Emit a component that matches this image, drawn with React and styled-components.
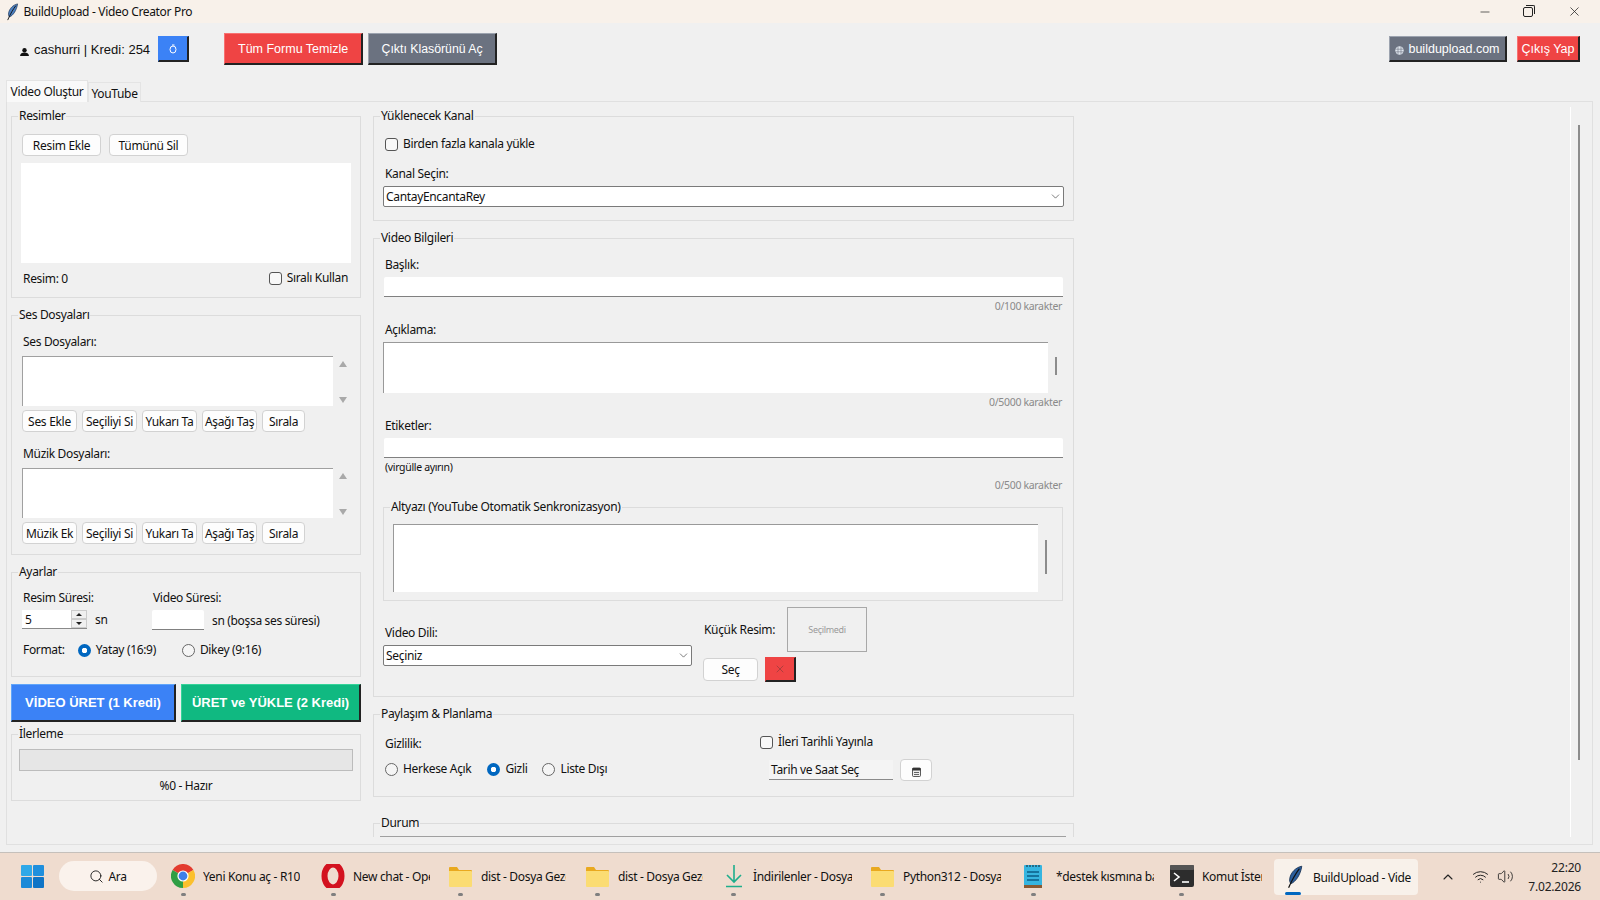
import React from "react";
import styled, { createGlobalStyle } from "styled-components";
import { Search, ChevronUp, ChevronDown, Wifi, Volume2, Minus, X } from "lucide-react";

const UI = `"Noto Sans", "Open Sans", sans-serif`;
const Global = createGlobalStyle`
  html, body { margin: 0; height: 900px; overflow: hidden; background: #f0f0f0; }
  * { box-sizing: border-box; }
  body { font-family: ${UI}; font-size: 12px; letter-spacing: -0.33px; color: #111; }
`;
const Page = styled.div`display:flex;flex-direction:column;height:900px;`;
const TitleBar = styled.div`height:23px;background:#f8f1ea;display:flex;align-items:center;padding-left:5px;font-size:12px;flex:none;`;
const TitleText = styled.span`margin-left:4px;`;
const WinControls = styled.div`margin-left:auto;display:flex;align-items:center;padding-right:3px;`;
const WinBtn = styled.span`width:45px;display:flex;justify-content:center;align-items:center;height:23px;color:#222;`;
const Restore = styled.span`width:10px;height:10px;border:1px solid #222;border-radius:2px;position:relative;background:#f8f1ea;margin:1px 4px 0 0;
  &::before{content:"";position:absolute;top:-3px;right:-3px;width:8px;height:8px;border-top:1px solid #222;border-right:1px solid #222;border-top-right-radius:2px;}`;
const Header = styled.div`height:58px;flex:none;display:flex;align-items:flex-start;padding:10px 20px 0 20px;`;
const UserBlock = styled.div`display:flex;align-items:center;height:26px;margin-top:3px;font-size:13px;font-family:"Liberation Sans",sans-serif;letter-spacing:0;`;
const UserText = styled.span`margin-left:5px;`;
const RawBtn = styled.button`font-family:"Liberation Sans",sans-serif;letter-spacing:0;color:#fff;background:${p=>p.$bg};
  border:1px solid ${p=>p.$hi};border-right:2px solid #222;border-bottom:2px solid #222;padding:0;display:flex;align-items:center;justify-content:center;
  width:${p=>p.$w}px;height:${p=>p.$h}px;font-size:${p=>p.$fs||12.5}px;margin-left:${p=>p.$ml||0}px;margin-top:${p=>p.$mt||0}px;font-weight:${p=>p.$bold?700:400};flex:none;`;
const Spacer = styled.div`flex:1;`;
const Tabs = styled.div`display:flex;align-items:flex-end;height:21px;padding-left:6px;flex:none;position:relative;z-index:1;margin-bottom:-1px;`;
const Tab = styled.div`height:${p=>p.$active?22:20}px;width:${p=>p.$w}px;background:${p=>p.$active?"#f9f9f9":"#f0f0f0"};border:1px solid #e4e4e4;border-bottom:none;display:flex;align-items:center;justify-content:center;padding-top:${p=>p.$active?0:2}px;font-size:12px;`;
const Pane = styled.div`height:744px;margin:0 7px 0 6px;border:1px solid #e0e0e0;flex:none;display:flex;padding:6px 0 0 4px;position:relative;`;
const LeftCol = styled.div`width:350px;flex:none;display:flex;flex-direction:column;`;
const RightCol = styled.div`width:701px;margin-left:12px;flex:none;height:729px;overflow:hidden;`;
const Field = styled.fieldset`margin:${p=>p.$mt||0}px 0 0;padding:0;border:1px solid #dcdcdc;min-width:0;height:${p=>p.$h}px;`;
const Legend = styled.legend`margin-left:${p=>p.$ml||6}px;padding:0 1px;line-height:16px;height:16px;`;
const Body = styled.div`padding:${p=>p.$pt||0}px ${p=>p.$pr||0}px 0 ${p=>p.$pl||10}px;`;
const Row = styled.div`display:flex;align-items:center;gap:${p=>p.$gap||0}px;margin-top:${p=>p.$mt||0}px;`;
const Label = styled.div`line-height:16px;height:16px;margin-top:${p=>p.$mt||0}px;padding-left:${p=>p.$pl||0}px;white-space:nowrap;`;
const SoftBtn = styled.button`height:${p=>p.$h||22}px;width:${p=>p.$w}px;background:#fdfdfd;border:1px solid #d2d2d2;border-radius:4px;font-family:${UI};font-size:12px;letter-spacing:-0.3px;color:#111;padding:0;white-space:nowrap;overflow:hidden;flex:none;display:flex;align-items:center;justify-content:center;`;
const ImageArea = styled.div`width:330px;height:100px;background:#fff;margin:7px 0 0 -1px;`;
const StatusRow = styled.div`display:flex;justify-content:space-between;align-items:center;height:18px;margin-top:6px;padding:0 12px 0 1px;`;
const Check = styled.input.attrs({type:"checkbox"})`appearance:none;width:13px;height:13px;margin:0;border:1px solid #555;border-radius:3px;background:#f8f8f8;flex:none;`;
const Radio = styled.input.attrs({type:"radio"})`appearance:none;width:13px;height:13px;margin:0;border-radius:50%;flex:none;border:1px solid #666;background:#f5f5f5;
  &:checked{border:none;background:radial-gradient(circle,#fff 0 2.5px,#0067c0 3px);}`;
const OptLabel = styled.label`display:flex;align-items:center;gap:5px;line-height:16px;height:16px;margin-left:${p=>p.$ml||0}px;margin-top:${p=>p.$mt||0}px;white-space:nowrap;`;
const ListWrap = styled.div`display:flex;margin-top:6px;height:50px;`;
const ListBox = styled.div`width:311px;background:#fff;border-top:1px solid #a0a0a0;border-left:1px solid #a0a0a0;`;
const ListArrows = styled.div`display:flex;flex-direction:column;justify-content:space-between;align-items:center;width:20px;padding:5px 0 3px 0;`;
const Tri = styled.span`width:0;height:0;border-left:4.5px solid transparent;border-right:4.5px solid transparent;${p=>p.$up?"border-bottom":"border-top"}:6px solid #a9a9a9;`;
const BtnRow = styled.div`display:flex;gap:5px;margin-top:4px;`;
const SettingsGrid = styled.div`display:grid;grid-template-columns:130px 1fr;`;
const Spin = styled.div`width:65px;height:19px;background:#fff;border-bottom:1px solid #8a8a8a;display:flex;align-items:center;padding-left:3px;justify-content:space-between;`;
const SpinBtns = styled.div`width:16px;height:18px;background:#f0f0f0;display:flex;flex-direction:column;`;
const SpinBtn = styled.span`flex:1;display:flex;align-items:center;justify-content:center;border:1px solid #ccc;`;
const TinyTri = styled.span`width:0;height:0;border-left:3px solid transparent;border-right:3px solid transparent;${p=>p.$up?"border-bottom":"border-top"}:3px solid #222;`;
const PlainInput = styled.div`width:${p=>p.$w?p.$w+"px":"calc(100% - 1px)"};height:${p=>p.$h||20}px;background:#fff;border-bottom:1px solid #808080;border-radius:2px 2px 0 0;flex:none;margin:${p=>p.$mt||0}px 0 0 ${p=>p.$w?0:1}px;`;
const Progress = styled.div`width:334px;height:22px;background:#e6e6e6;border:1px solid #bcbcbc;margin:7px 0 0 7px;`;
const Centered = styled.div`text-align:center;line-height:16px;margin-top:7px;`;
const Select = styled.div`height:21px;width:${p=>p.$w}px;background:#fff;border:1px solid #7a7a7a;border-radius:2px;display:flex;align-items:center;justify-content:space-between;padding:0 1px 0 2px;margin-top:${p=>p.$mt||0}px;`;
const Counter = styled.div`text-align:right;color:#8a8a8a;font-size:10.5px;line-height:16px;height:16px;padding-right:1px;margin-top:${p=>p.$mt||0}px;`;
const Small = styled.div`font-size:10.5px;line-height:16px;height:16px;margin-top:1px;padding-left:2px;`;
const AreaWrap = styled.div`display:flex;margin-top:${p=>p.$mt||4}px;`;
const TextArea = styled.div`width:${p=>p.$w}px;height:${p=>p.$h}px;background:#fff;border-top:1px solid #999;border-left:1px solid #999;flex:none;`;
const ThinBar = styled.div`width:2px;height:${p=>p.$h}px;background:#8c8c8c;margin:${p=>p.$mt}px 0 0 ${p=>p.$ml}px;`;
const Split = styled.div`display:flex;margin-top:6px;`;
const VideoLang = styled.div`width:308px;padding-top:18px;`;
const ThumbCol = styled.div`margin-left:12px;display:flex;flex-direction:column;`;
const ThumbLabel = styled.span`width:84px;padding-left:1px;white-space:nowrap;`;
const Thumb = styled.div`width:80px;height:45px;border:1px solid #a8a8a8;display:flex;align-items:center;justify-content:center;color:#9a9a9a;font-size:9px;`;
const ThumbRow = styled.div`display:flex;align-items:center;`;
const PlanCols = styled.div`display:flex;`;
const Privacy = styled.div`width:375px;padding-top:14px;`;
const Schedule = styled.div`padding-top:11px;`;
const DateInput = styled.div`width:124px;height:20px;background:#f4f4f4;border-bottom:1px solid #8a8a8a;display:flex;align-items:center;padding-left:2px;margin-left:9px;`;
const InnerLine = styled.div`height:6px;margin:5px 7px 0 6px;border-top:1px solid #a0a0a0;background:#f0f0f0;`;
const ScrollLine = styled.div`position:absolute;left:1563px;top:5px;width:1px;height:730px;background:#fff;`;
const ScrollThumb = styled.div`position:absolute;left:1571px;top:23px;width:2px;height:635px;background:#8c8c8c;`;
const Taskbar = styled.div`position:relative;margin-top:7px;flex:1;background:#efdccf;border-top:1px solid #c5c0bb;display:flex;align-items:center;padding:0 0 2px 21px;`;
const SearchPill = styled.div`width:98px;height:30px;border-radius:15px;background:#faf2ec;margin-left:15px;display:flex;align-items:center;justify-content:center;gap:4px;font-size:12px;margin-right:14px;flex:none;`;
const TaskItem = styled.div`width:${p=>p.$w}px;height:46px;flex:none;display:flex;align-items:center;position:relative;`;
const TaskIcon = styled.span`width:${p=>p.$w||32}px;flex:none;display:flex;align-items:center;position:relative;`;
const TaskLabel = styled.span`width:${p=>p.$w}px;overflow:hidden;white-space:nowrap;flex:none;`;
const Dot = styled.span`position:absolute;left:${p=>p.$l}px;top:40px;width:5px;height:3px;border-radius:2px;background:#7f7f7f;`;
const Active = styled.div`margin-left:-11px;width:144px;height:36px;background:#f8f1ea;border-radius:4px;display:flex;align-items:center;padding-left:11px;position:relative;flex:none;margin-top:2px;`;
const ActiveBar = styled.span`position:absolute;left:11px;bottom:0;width:16px;height:3px;border-radius:2px;background:#0067c0;`;
const Tray = styled.div`position:absolute;right:0;top:0;height:47px;display:flex;align-items:center;color:#222;`;
const Clock = styled.div`font-size:12px;letter-spacing:-0.2px;text-align:right;line-height:19px;margin:0 19px 0 14px;`;
const TrayIcon = styled.span`display:flex;margin-right:${p=>p.$mr}px;`;

const Feather = ({s=18,dark}) => (
  <svg width={s*0.8} height={s} viewBox="0 0 16 20">
    <path d="M14 1C9 2 5 6 4 11c-.4 2 0 3.5 1 4.5C9 14 13 8 14 1Z" fill={dark?"#2b5d9c":"#4c7fc0"} stroke="#17304f" strokeWidth=".7"/>
    <path d="M12 3C9 7 6 12 3 19" stroke="#111" strokeWidth="1" fill="none"/>
  </svg>
);
const WinLogo = () => (
  <svg width="23" height="23" viewBox="0 0 23 23">
    <rect x="0" y="0" width="11" height="11" rx="1" fill="#2fa8e8"/><rect x="12" y="0" width="11" height="11" rx="1" fill="#1f8fdd"/>
    <rect x="0" y="12" width="11" height="11" rx="1" fill="#1c8ad8"/><rect x="12" y="12" width="11" height="11" rx="1" fill="#0f74c6"/>
  </svg>
);
const Chrome = () => (
  <svg width="24" height="24" viewBox="0 0 24 24">
    <path d="M12 12 1.6 6A12 12 0 0 1 22.4 6Z" fill="#e33b2e"/>
    <path d="M12 12 22.4 6A12 12 0 0 1 12 24Z" fill="#fbc02d"/>
    <path d="M12 12 12 24A12 12 0 0 1 1.6 6Z" fill="#2f9e44"/>
    <circle cx="12" cy="12" r="5.6" fill="#fff"/><circle cx="12" cy="12" r="4.4" fill="#3f7fe8"/>
  </svg>
);
const Opera = () => (
  <svg width="24" height="24" viewBox="0 0 24 24">
    <ellipse cx="12" cy="12" rx="8.5" ry="11.5" fill="none" stroke="#d3121f" strokeWidth="6"/>
  </svg>
);
const Folder = () => (
  <svg width="23" height="21" viewBox="0 0 23 21">
    <path d="M0 2a1 1 0 0 1 1-1h7l2 3h12a1 1 0 0 1 1 1v3H0Z" fill="#e9a91f"/>
    <path d="M0 5h22a1 1 0 0 1 1 1v14a1 1 0 0 1-1 1H1a1 1 0 0 1-1-1Z" fill="#fbdc73"/>
  </svg>
);
const Download = () => (
  <svg width="20" height="24" viewBox="0 0 20 24" fill="none" stroke="#1fae8c" strokeWidth="1.6">
    <path d="M10 1v17M3 11l7 7 7-7M2 22.5h16"/>
  </svg>
);
const Notepad = () => (
  <svg width="18" height="24" viewBox="0 0 18 24">
    <rect x="0" y="1" width="18" height="23" rx="1" fill="#36b5e0"/><rect x="0" y="21" width="18" height="3" fill="#8a5a32"/>
    <path d="M3 8h12M3 12h12M3 16h12" stroke="#0b5d86" strokeWidth="1.6"/>
    <path d="M3 1v2M6 1v2M9 1v2M12 1v2M15 1v2" stroke="#123" strokeWidth="1"/>
  </svg>
);
const Terminal = () => (
  <svg width="24" height="22" viewBox="0 0 24 22">
    <rect width="24" height="22" rx="2" fill="#2d2d2d"/><rect width="24" height="5" rx="1" fill="#555"/>
    <path d="M4 8l5 4-5 4" fill="none" stroke="#fff" strokeWidth="1.6"/><path d="M12 17h7" stroke="#fff" strokeWidth="1.6"/>
  </svg>
);
const Person = () => (
  <svg width="9" height="8" viewBox="0 0 9 8" style={{marginTop:6}}><circle cx="4.5" cy="2.3" r="2.2" fill="#111"/><path d="M0 8c.4-2.5 2-3.4 4.5-3.4S8.600 5.500 9 8Z" fill="#111"/></svg>
);
const Refresh = () => (
  <svg width="8" height="10" viewBox="0 0 8 10" fill="none" stroke="#fff" strokeWidth="1"><ellipse cx="4" cy="5.500" rx="3" ry="3.500"/><path d="M3 1h2.500"/></svg>
);
const Globe = () => (
  <svg width="9" height="9" viewBox="0 0 9 9" style={{marginRight:4,marginTop:3}}><circle cx="4.500" cy="4.500" r="4.200" fill="#dfe6ee"/><path d="M.5 3.200h8M.5 5.800h8M3 .5v8M6 .5v8" stroke="#6b7280" strokeWidth=".6"/></svg>
);
const Calendar = () => (
  <svg width="9" height="10" viewBox="0 0 9 10" style={{marginTop:4}}><rect x=".5" y="1" width="8" height="8.500" rx="1" fill="#eee" stroke="#333" strokeWidth=".8"/><rect x=".5" y="1" width="8" height="2.500" fill="#333"/><path d="M2 5.500h5M2 7.500h5" stroke="#555" strokeWidth=".9"/></svg>
);

const SoundButtons = ({first}) => (
  <BtnRow>
    <SoftBtn $w={55}>{first}</SoftBtn>
    <SoftBtn $w={55}>Seçiliyi Si</SoftBtn>
    <SoftBtn $w={55}>Yukarı Ta</SoftBtn>
    <SoftBtn $w={55}>Aşağı Taş</SoftBtn>
    <SoftBtn $w={43}>Sırala</SoftBtn>
  </BtnRow>
);
const SoundList = () => (
  <ListWrap>
    <ListBox />
    <ListArrows><Tri $up /><Tri /></ListArrows>
  </ListWrap>
);

const tasks = [
  {w:150,lw:97,icon:<Chrome/>,dot:10,t:"Yeni Konu aç - R10"},
  {w:128,lw:77,icon:<Opera/>,dot:10,t:"New chat - Opera"},
  {w:137,lw:85,icon:<Folder/>,dot:9,t:"dist - Dosya Gezgini"},
  {w:138,lw:85,icon:<Folder/>,dot:9,t:"dist - Dosya Gezgini"},
  {w:147,lw:99,icon:<Download/>,iw:29,dot:7,t:"İndirilenler - Dosya"},
  {w:153,lw:98,icon:<Folder/>,dot:9,t:"Python312 - Dosya"},
  {w:146,lw:98,icon:<Notepad/>,dot:7,t:"*destek kısmına bak"},
  {w:115,lw:60,icon:<Terminal/>,dot:9,t:"Komut İstemi"},
];

export default function App() {
  return (
    <Page>
      <Global />
      <TitleBar>
        <Feather />
        <TitleText>BuildUpload - Video Creator Pro</TitleText>
        <WinControls>
          <WinBtn><Minus size={14} strokeWidth={1.2}/></WinBtn>
          <WinBtn><Restore/></WinBtn>
          <WinBtn><X size={15} strokeWidth={1.2}/></WinBtn>
        </WinControls>
      </TitleBar>
      <Header>
        <UserBlock><Person /><UserText>cashurri | Kredi: 254</UserText></UserBlock>
        <RawBtn $bg="#3b82f6" $hi="#3b82f6" $w={31} $h={26} $ml={8} $mt={3}><Refresh/></RawBtn>
        <RawBtn $bg="#ef4444" $hi="#f87171" $w={139} $h={32} $ml={35}>Tüm Formu Temizle</RawBtn>
        <RawBtn $bg="#6b7280" $hi="#9ca3af" $w={129} $h={32} $ml={5} $fs={12.3}>Çıktı Klasörünü Aç</RawBtn>
        <Spacer />
        <RawBtn $bg="#6b7280" $hi="#9ca3af" $w={118} $h={26} $mt={3}><Globe/>buildupload.com</RawBtn>
        <RawBtn $bg="#ef4444" $hi="#f87171" $w={63} $h={26} $ml={10} $mt={3}>Çıkış Yap</RawBtn>
      </Header>
      <Tabs>
        <Tab $active $w={82}>Video Oluştur</Tab>
        <Tab $w={53}>YouTube</Tab>
      </Tabs>
      <Pane>
        <LeftCol>
          <Field $h={190}>
            <Legend>Resimler</Legend>
            <Body $pt={10}>
              <Row $gap={8}><SoftBtn $w={79}>Resim Ekle</SoftBtn><SoftBtn $w={79}>Tümünü Sil</SoftBtn></Row>
              <ImageArea />
              <StatusRow><span>Resim: 0</span><OptLabel><Check/>Sıralı Kullan</OptLabel></StatusRow>
            </Body>
          </Field>
          <Field $h={248} $mt={9}>
            <Legend>Ses Dosyaları</Legend>
            <Body $pt={11}>
              <Label $pl={1}>Ses Dosyaları:</Label>
              <SoundList />
              <SoundButtons first="Ses Ekle" />
              <Label $mt={14} $pl={1}>Müzik Dosyaları:</Label>
              <SoundList />
              <SoundButtons first="Müzik Ek" />
            </Body>
          </Field>
          <Field $h={113} $mt={9}>
            <Legend>Ayarlar</Legend>
            <Body $pt={10}>
              <SettingsGrid>
                <div>
                  <Label $pl={1}>Resim Süresi:</Label>
                  <Row $mt={4} $gap={8}>
                    <Spin>5<SpinBtns><SpinBtn><TinyTri $up/></SpinBtn><SpinBtn><TinyTri/></SpinBtn></SpinBtns></Spin>
                    <span>sn</span>
                  </Row>
                </div>
                <div>
                  <Label $pl={1}>Video Süresi:</Label>
                  <Row $mt={4} $gap={8}>
                    <PlainInput $w={52} />
                    <span>sn (boşsa ses süresi)</span>
                  </Row>
                </div>
              </SettingsGrid>
              <Row $mt={12}>
                <Label $pl={1}>Format:</Label>
                <OptLabel $ml={13}><Radio name="fmt" defaultChecked/>Yatay (16:9)</OptLabel>
                <OptLabel $ml={26}><Radio name="fmt"/>Dikey (9:16)</OptLabel>
              </Row>
            </Body>
          </Field>
          <Row $mt={7} $gap={5}>
            <RawBtn $bg="#3b82f6" $hi="#60a5fa" $w={165} $h={38} $fs={13} $bold>VİDEO ÜRET (1 Kredi)</RawBtn>
            <RawBtn $bg="#10b981" $hi="#34d399" $w={180} $h={38} $fs={13} $bold>ÜRET ve YÜKLE (2 Kredi)</RawBtn>
          </Row>
          <Field $h={75} $mt={4}>
            <Legend>İlerleme</Legend>
            <Progress />
            <Centered>%0 - Hazır</Centered>
          </Field>
        </LeftCol>
        <RightCol>
          <Field $h={113}>
            <Legend>Yüklenecek Kanal</Legend>
            <Body $pt={12} $pl={9}>
              <OptLabel $ml={2}><Check/>Birden fazla kanala yükle</OptLabel>
              <Label $mt={14} $pl={2}>Kanal Seçin:</Label>
              <Select $w={681} $mt={4}>CantayEncantaRey<ChevronDown size={13} strokeWidth={1} /></Select>
            </Body>
          </Field>
          <Field $h={467} $mt={9}>
            <Legend>Video Bilgileri</Legend>
            <Body $pt={11} $pl={9} $pr={10}>
              <Label $pl={2}>Başlık:</Label>
              <PlainInput $mt={4} />
              <Counter $mt={1}>0/100 karakter</Counter>
              <Label $mt={8} $pl={2}>Açıklama:</Label>
              <AreaWrap><TextArea $w={665} $h={51}/><ThinBar $h={18} $mt={15} $ml={7}/></AreaWrap>
              <Counter $mt={1}>0/5000 karakter</Counter>
              <Label $mt={8} $pl={2}>Etiketler:</Label>
              <PlainInput $mt={4} />
              <Small>(virgülle ayırın)</Small>
              <Counter $mt={2}>0/500 karakter</Counter>
              <Field $h={102} $mt={6}>
                <Legend>Altyazı (YouTube Otomatik Senkronizasyon)</Legend>
                <Body $pl={9}>
                  <AreaWrap $mt={9}><TextArea $w={645} $h={68}/><ThinBar $h={34} $mt={16} $ml={7}/></AreaWrap>
                </Body>
              </Field>
              <Split>
                <VideoLang>
                  <Label $pl={2}>Video Dili:</Label>
                  <Select $w={309} $mt={4}>Seçiniz<ChevronDown size={13} strokeWidth={1} /></Select>
                </VideoLang>
                <ThumbCol>
                  <ThumbRow><ThumbLabel>Küçük Resim:</ThumbLabel><Thumb>Seçilmedi</Thumb></ThumbRow>
                  <Row $mt={5} $gap={7}>
                    <SoftBtn $w={55} $h={23}>Seç</SoftBtn>
                    <RawBtn $bg="#ef4444" $hi="#ef4444" $w={31} $h={25}><X size={12} color="#9a3b3b" strokeWidth={1.5}/></RawBtn>
                  </Row>
                </ThumbCol>
              </Split>
            </Body>
          </Field>
          <Field $h={91} $mt={9}>
            <Legend>Paylaşım & Planlama</Legend>
            <Body $pl={11}>
              <PlanCols>
                <Privacy>
                  <Label>Gizlilik:</Label>
                  <Row $mt={9}>
                    <OptLabel><Radio name="pr"/>Herkese Açık</OptLabel>
                    <OptLabel $ml={16}><Radio name="pr" defaultChecked/>Gizli</OptLabel>
                    <OptLabel $ml={15}><Radio name="pr"/>Liste Dışı</OptLabel>
                  </Row>
                </Privacy>
                <Schedule>
                  <OptLabel $mt={1}><Check/>İleri Tarihli Yayınla</OptLabel>
                  <Row $mt={9} $gap={7}>
                    <DateInput>Tarih ve Saat Seç</DateInput>
                    <SoftBtn $w={32} $h={22}><Calendar/></SoftBtn>
                  </Row>
                </Schedule>
              </PlanCols>
            </Body>
          </Field>
          <Field $h={40} $mt={18}>
            <Legend>Durum</Legend>
            <InnerLine />
          </Field>
        </RightCol>
        <ScrollLine />
        <ScrollThumb />
      </Pane>
      <Taskbar>
        <WinLogo />
        <SearchPill><Search size={15} strokeWidth={1.4}/>Ara</SearchPill>
        {tasks.map((t,i)=>(
          <TaskItem key={i} $w={t.w}>
            <TaskIcon $w={t.iw}>{t.icon}</TaskIcon>
            <TaskLabel $w={t.lw}>{t.t}</TaskLabel>
            <Dot $l={t.dot}/>
          </TaskItem>
        ))}
        <Active><TaskIcon $w={28}><Feather s={24} dark/></TaskIcon><TaskLabel $w={98}>BuildUpload - Video</TaskLabel><ActiveBar/></Active>
        <Tray>
          <TrayIcon $mr={16}><ChevronUp size={16} strokeWidth={1.6}/></TrayIcon>
          <TrayIcon $mr={8}><Wifi size={17} strokeWidth={1.4}/></TrayIcon>
          <TrayIcon $mr={0}><Volume2 size={17} strokeWidth={1.2}/></TrayIcon>
          <Clock>22:20<br/>7.02.2026</Clock>
        </Tray>
      </Taskbar>
    </Page>
  );
}
